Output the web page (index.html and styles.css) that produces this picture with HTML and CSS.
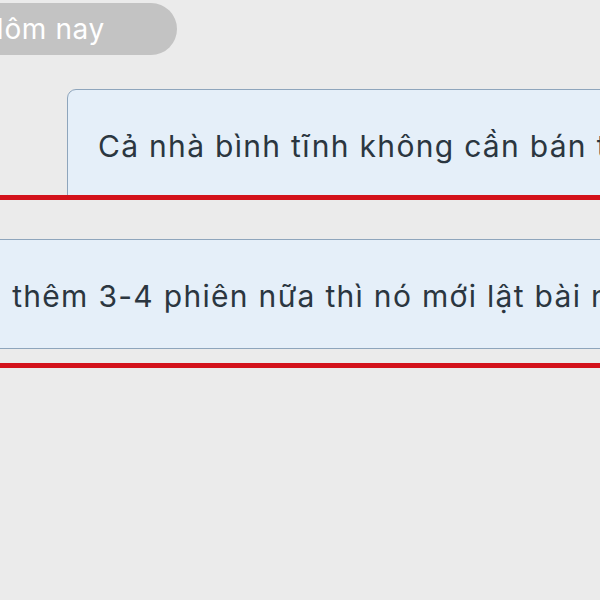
FILE: index.html
```html
<!DOCTYPE html>
<html>
<head>
    <meta charset="utf-8" />
    <title>Chat</title>
    <link rel="stylesheet" href="styles.css">
</head>
<body>
    <div class="thread">
        <div class="day">Hôm nay</div>
        <div class="bubble bubble-first">
            <p>Cả nhà bình tĩnh không cần bán tháo</p>
        </div>
        <div class="mark"></div>
        <div class="bubble bubble-second">
            <p>đợi thêm 3-4 phiên nữa thì nó mới lật bài nhé</p>
        </div>
        <div class="mark mark-second"></div>
    </div>
</body>
</html>
```

FILE: styles.css
```css
html,
body{
    margin:0;
    padding:0;
    height:100%;
}
body{
    background:#ebebeb;
    font-family:Inter, Roboto, sans-serif;
    color:#2b3640;
    overflow:hidden;
}
.thread{
    display:flex;
    flex-direction:column;
    align-items:flex-start;
    padding-top:3px;
}
.day{
    height:52px;
    line-height:52px;
    margin-left:-17px;
    width:194px;
    box-sizing:border-box;
    background:#c3c3c3;
    border-radius:0 26px 26px 0;
    color:#fff;
    font-size:28px;
    letter-spacing:0.6px;
}
.bubble{
    box-sizing:border-box;
    background:#e5eff9;
    border:1.5px solid #8ea5bc;
    display:flex;
    align-items:center;
    white-space:nowrap;
}
.bubble p{
    margin:0;
    font-size:30px;
    letter-spacing:1.3px;
}
.bubble-first{
    margin-top:34px;
    margin-left:67px;
    width:600px;
    height:108px;
    border-radius:9px 0 0 0;
    padding-left:30px;
    padding-top:5px;
}
.bubble-second{
    margin-top:39px;
    margin-left:-46px;
    width:740px;
    height:110px;
    padding-top:4px;
}
.mark{
    align-self:stretch;
    height:5px;
    margin-top:-2px;
    background:#d3121b;
}
.mark-second{
    margin-top:14px;
}
```
